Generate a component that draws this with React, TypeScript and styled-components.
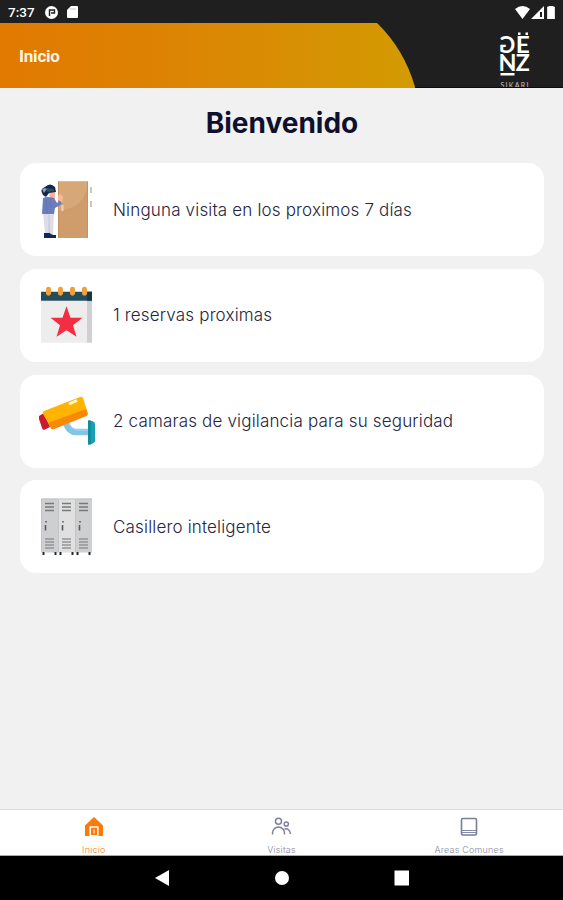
import React from "react";
import styled, { createGlobalStyle } from "styled-components";

const GlobalStyle = createGlobalStyle`
  * { box-sizing: border-box; }
  html, body { margin: 0; padding: 0; }
  body { font-family: Inter, "Liberation Sans", sans-serif; background: #f1f1f1; overflow: hidden; }
  svg { display: block; flex: none; }
`;

const Screen = styled.div`
  width: 563px;
  height: 900px;
  display: flex;
  flex-direction: column;
  background: #f1f1f1;
  overflow: hidden;
`;

const StatusBar = styled.div`
  height: 23px;
  flex: none;
  display: flex;
  align-items: center;
  justify-content: space-between;
  padding: 1px 6px 0 8px;
  background: #1f1f1f;
`;

const StatusGroup = styled.div<{ $gap: number }>`
  display: flex;
  align-items: center;
  gap: ${(p) => p.$gap}px;
`;

const Clock = styled.span`
  width: 27px;
  margin-right: 1px;
  font: 500 13.5px/16px Roboto, sans-serif;
  color: #fff;
  white-space: nowrap;
`;

const Header = styled.header`
  height: 65px;
  flex: none;
  display: grid;
  background: #1f1f1f;
  border-bottom: 1px solid #0c0c0c;
  > * { grid-area: 1 / 1; }
`;

const HeaderContent = styled.div`
  z-index: 1;
  display: flex;
  justify-content: space-between;
  padding: 0 28px 0 19px;
`;

const HeaderTitle = styled.h2`
  margin: 0;
  font: 700 17px/67px Roboto, sans-serif;
  letter-spacing: -0.2px;
  color: #fff4e4;
`;

const Main = styled.main`
  flex: 1;
  padding: 15px 19px 0 20px;
`;

const Heading = styled.h1`
  margin: 0 0 20px;
  height: 40px;
  font-size: 28px;
  line-height: 41px;
  font-weight: 700;
  text-align: center;
  color: #10102e;
`;

const CardList = styled.div`
  display: flex;
  flex-direction: column;
  gap: 12.8px;
`;

const Card = styled.section`
  height: 93px;
  display: flex;
  align-items: center;
  gap: 16px;
  padding-left: 17px;
  border-radius: 16px;
  background: #fff;
`;

const CardText = styled.p`
  margin: 0;
  font-size: 17px;
  line-height: 24px;
  font-weight: 300;
  letter-spacing: 0.17px;
  color: #25253f;
  white-space: nowrap;
`;

const TabBar = styled.nav`
  height: 47px;
  flex: none;
  display: grid;
  grid-template-columns: repeat(3, 1fr);
  background: #fff;
  border-top: 1px solid #dcdcdc;
  border-bottom: 1px solid #aaa;
`;

const Tab = styled.div<{ $active?: boolean }>`
  display: flex;
  flex-direction: column;
  align-items: center;
  padding-top: 5px;
  gap: 4.5px;
  font-size: 9px;
  line-height: 11px;
  font-weight: 300;
  letter-spacing: 0.2px;
  color: ${(p) => (p.$active ? "#f97b22" : "#8388a3")};
`;

const SystemNav = styled.div`
  height: 44px;
  flex: none;
  display: flex;
  align-items: center;
  justify-content: center;
  gap: 104px;
  background: #000;
`;

const HeaderArt = () => (
  <svg width="563" height="65" viewBox="0 0 563 65">
    <defs>
      <linearGradient id="amber">
        <stop offset="0" stopColor="#e27900" />
        <stop offset="0.4" stopColor="#dc8304" />
        <stop offset="1" stopColor="#d39b02" />
      </linearGradient>
    </defs>
    <path d="M0 0H377Q404 26 415 64V65H0Z" fill="url(#amber)" />
  </svg>
);

const Logo = () => (
  <svg width="38" height="64" viewBox="0 0 38 64" fill="#fff" fontFamily="Lato, sans-serif">
    <g fontSize="22" fontWeight="700">
      <text transform="translate(18.3 29.5) scale(-1 1)" textLength="16" lengthAdjust="spacingAndGlyphs">G</text>
      <text x="18.8" y="29.5" textLength="14" lengthAdjust="spacingAndGlyphs">E</text>
      <text x="1.4" y="48" textLength="18" lengthAdjust="spacingAndGlyphs">N</text>
      <text x="18.8" y="48" textLength="14" lengthAdjust="spacingAndGlyphs">Z</text>
    </g>
    <path d="M21 9.500h2.500v2.500H21zM28.500 9.500H31v2.500h-2.500zM3.500 50h14v2.600h-14z" />
    <text x="3.500" y="65" fontSize="7" textLength="28" opacity="0.7">SIKARI</text>
  </svg>
);

const VisitorIcon = () => (
  <svg width="60" height="60" viewBox="0 0 60 60">
    <path d="M21 1.5h30V58H21z" fill="#cf9d6b" />
    <path d="M21 1.5h30Q48 30 21 30z" fill="#d6a878" />
    <path d="M21 1.5h1V58H21zM50 1.5h1V58h-1z" fill="#c4915f" />
    <path d="M53 7h2v6h-2zM53 21h2v6h-2z" fill="#cfc4bd" />
    <path d="M6 32h11l-1 22H8z" fill="#dcdde8" />
    <path d="M12 35v18" stroke="#c1c4d5" fill="none" />
    <path d="M7 53h6q1 2 6 2v3H7z" fill="#17264f" />
    <path d="M12 12h6v7h-5z" fill="#f8b19c" />
    <path d="M6 18q4-2 11 0l3 5 3-3 2 4-7 4-1 6H5z" fill="#6b7dbd" />
    <path d="M9 20l1 13M12 22l3 5" stroke="#5f72b3" fill="none" />
    <path d="M21 20q-1-5 2-6 5 2 2 8z" fill="#f7b897" />
    <path d="M24.5 25h2v6h-2z" fill="#f1d3bc" />
    <path d="M6 15Q2 9 8 7q5-5 10 0l1 5-7 1-3 4z" fill="#152749" />
    <path d="M5 9l3-1 2 1-3 4z" fill="#86a3bd" />
    <path d="M10 8l6 1 2 2-8 1z" fill="#304e66" />
  </svg>
);

const CalendarIcon = () => (
  <svg width="60" height="60" viewBox="0 -0.7 60 60">
    <path d="M4 15h51v42H4z" fill="#ededee" />
    <path d="M50 15h5v42h-5z" fill="#cfd0d3" />
    <path d="M4 6h51v9H4z" fill="#234d5d" />
    <path d="M50 6h5v9h-5z" fill="#153746" />
    {[11.5, 23.5, 35.5, 47.5].map((x) => (
      <rect key={x} x={x - 2.5} y="1" width="5" height="9" rx="2.4" fill="#efa03b" />
    ))}
    <path d="M29.5 20.500l4 11.5H45.5L36 39.5 39.5 51 29.5 44.5 19.5 51 23 39.5 13.5 32H25.5z" fill="#f52d42" />
  </svg>
);

const CameraIcon = () => (
  <svg width="60" height="60" viewBox="0 0 60 60">
    <path d="M29 32Q32 41 39 41H52" fill="none" stroke="#82c5e8" strokeWidth="6.5" />
    <path d="M32 32Q34 38 40 39H51" fill="none" stroke="#a5daf2" />
    <path d="M51 29.500q6 0 7 3v18q-2 3-7 3z" fill="#1aa0b5" />
    <path d="M51 29.500h3v24h-3z" fill="#118b9e" />
    <path d="M2 25l5-3 6 14-6 3q-1 0-2-2L2 28z" fill="#c9182f" />
    <path d="M7 20l36-14q2-1 3 1l4.500 14q1 2-1 3L17 38q-2 1-3-1L6 23q-1-2 1-3z" fill="#ffb400" />
    <path d="M11 32l38-14 1.500 4q1 2-1 3L17 38q-2 1-3-1z" fill="#f98905" />
    <path d="M32 13l8-3.500" stroke="#fff7c8" strokeWidth="3" />
  </svg>
);

const LockerIcon = () => (
  <svg width="60" height="60" viewBox="0 0 60 60">
    {[4, 21, 38].map((x, i) => (
      <g key={x}>
        <rect x={x} y="1.500" width="17" height="54" fill={i === 1 ? "#e0e0e1" : "#cecfd0"} />
        <path d={`M${x + 0.5} 2v53M${x + 1} 2h16`} stroke="#c3c4c5" fill="none" />
        <path d={`M${x + 4} 6.500h9M${x + 4} 10h9M${x + 4} 13.500h9`} stroke="#77797b" strokeWidth="1.500" />
        <path d={`M${x + 4} 42h9M${x + 4} 45h9M${x + 4} 48h9M${x + 4} 51h9`} stroke="#939597" strokeWidth="1.500" />
        <path d={`M${x + 4.5} 28v5.500M${x + 5} 24v1.500`} stroke="#595b5d" strokeWidth="1.600" />
        <path d={`M${x + 2.5} 55v3M${x + 14.5} 55v3`} stroke="#282828" strokeWidth="2" />
      </g>
    ))}
  </svg>
);

const cards = [
  { text: "Ninguna visita en los proximos 7 días", Icon: VisitorIcon },
  { text: "1 reservas proximas", Icon: CalendarIcon },
  { text: "2 camaras de vigilancia para su seguridad", Icon: CameraIcon },
  { text: "Casillero inteligente", Icon: LockerIcon },
];

const HomeIcon = () => (
  <svg width="24" height="24" viewBox="0 0 24 24">
    <path d="M12 2L21 10.500V21H3V10.500z" fill="#f97a0b" />
    <path d="M8.200 21v-9h7.600v9" fill="none" stroke="#fff" strokeWidth="1.500" />
    <path d="M12 14.500v4M9 20.500h6" stroke="#fff" strokeWidth="1" />
  </svg>
);

const PeopleIcon = () => (
  <svg width="24" height="24" viewBox="0 0 24 24" fill="none" stroke="#7b819f" strokeWidth="1.500">
    <circle cx="9.500" cy="6.200" r="3" />
    <path d="M3.500 19.500v-1.500a6 6 0 0 1 12 0v1.500" />
    <circle cx="17.300" cy="9" r="2.100" />
    <path d="M15.500 14q5-1 6 5" />
  </svg>
);

const BookIcon = () => (
  <svg width="24" height="24" viewBox="0 0 24 24" fill="none" stroke="#777f9d" strokeWidth="1.600">
    <rect x="4.500" y="3.500" width="15" height="16.500" rx="1.500" />
    <path d="M5 15.500h14M5 17.500h14" strokeWidth="0.900" />
  </svg>
);

export default function App() {
  return (
    <Screen>
      <GlobalStyle />
      <StatusBar>
        <StatusGroup $gap={9}>
          <Clock>7:37</Clock>
          <svg width="13" height="13" viewBox="0 0 13 13">
            <circle cx="6.500" cy="6.500" r="6.500" fill="#fff" />
            <path d="M4.500 10V4h5v3H6" stroke="#1f1f1f" strokeWidth="1.400" fill="none" />
          </svg>
          <svg width="11" height="12" viewBox="0 0 11 12">
            <path d="M4 0h6q1 0 1 1v10q0 1-1 1H1q-1 0-1-1V4z" fill="#fff" />
            <path d="M4 2v2M6 2v2M8 2v2" stroke="#aaa" strokeWidth=".7" />
          </svg>
        </StatusGroup>
        <StatusGroup $gap={1}>
          <svg width="15" height="13" viewBox="0 0 15 13">
            <path d="M0 3Q7.500-3 15 3L7.500 13z" fill="#fff" />
          </svg>
          <svg width="13" height="13" viewBox="0 0 13 13">
            <path d="M0 13L13 0V13z" fill="#fff" />
            <path d="M9 6h2v5H9z" fill="#1f1f1f" />
          </svg>
          <svg width="12" height="13" viewBox="0 0 12 13">
            <path d="M4 0h4v1h1.500v12h-7V1H4z" fill="#fff" stroke="#fff" strokeWidth=".7" />
          </svg>
        </StatusGroup>
      </StatusBar>
      <Header>
        <HeaderArt />
        <HeaderContent>
          <HeaderTitle>Inicio</HeaderTitle>
          <Logo />
        </HeaderContent>
      </Header>
      <Main>
        <Heading>Bienvenido</Heading>
        <CardList>
          {cards.map(({ text, Icon }) => (
            <Card key={text}>
              <Icon />
              <CardText>{text}</CardText>
            </Card>
          ))}
        </CardList>
      </Main>
      <TabBar>
        <Tab $active>
          <HomeIcon />
          Inicio
        </Tab>
        <Tab>
          <PeopleIcon />
          Visitas
        </Tab>
        <Tab>
          <BookIcon />
          Areas Comunes
        </Tab>
      </TabBar>
      <SystemNav>
        <svg width="16" height="16" viewBox="0 0 16 16">
          <path d="M1 8L15 0v16z" fill="#fff" />
        </svg>
        <svg width="16" height="16" viewBox="0 0 16 16">
          <circle cx="8" cy="8" r="7" fill="#fff" />
        </svg>
        <svg width="16" height="16" viewBox="0 0 16 16">
          <rect x="0.500" y="0.500" width="14.500" height="15" fill="#fff" />
        </svg>
      </SystemNav>
    </Screen>
  );
}
